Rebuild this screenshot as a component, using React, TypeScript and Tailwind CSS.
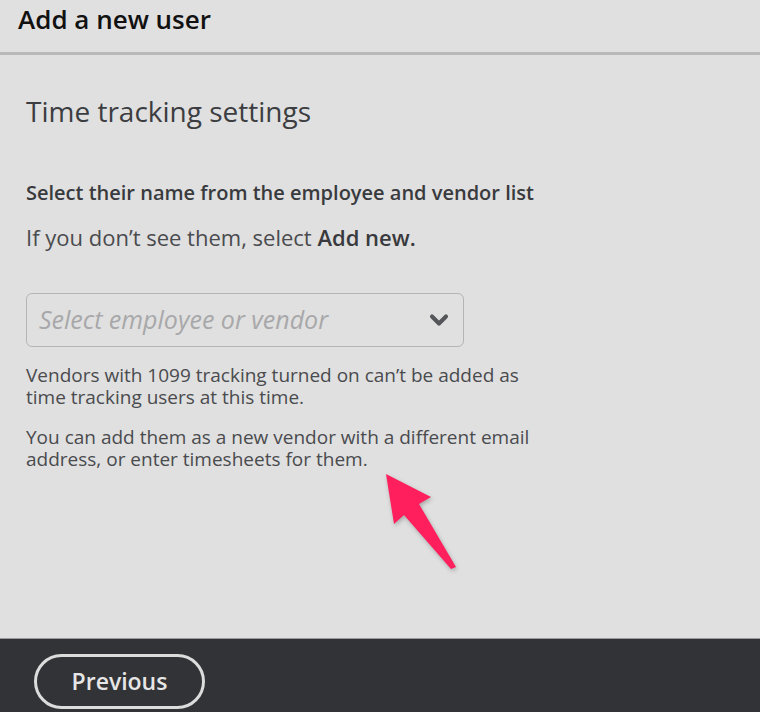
import { ChevronDown } from "lucide-react";

function Arrow() {
  return (
    <svg
      width="90"
      height="110"
      viewBox="380 468 90 110"
      className="absolute left-[380px] top-[468px] drop-shadow-[1px_2px_2px_rgba(0,0,0,0.25)]"
    >
      <polygon
        points="386,474 431,497 419,504 456,567 451,569 404,515 394,524"
        fill="#ff1f5d"
      />
    </svg>
  );
}

export default function App() {
  return (
    <div className="relative flex h-[712px] w-[760px] flex-col overflow-hidden bg-[#e0e0e0] font-['Open_Sans',sans-serif] text-[#393a3d]">
      <header className="flex h-[55px] shrink-0 items-start border-b-[3px] border-[#b9b9b9] px-[18px] pt-[3px]">
        <h1 className="text-[26px] font-semibold leading-[32px] text-[#111]">Add a new user</h1>
      </header>

      <main className="flex-1 px-[26px] pt-[38px]">
        <h2 className="text-[28px] leading-[36px] text-[#3c3d40]">Time tracking settings</h2>

        <p className="mt-[51px] text-[20px] font-semibold leading-[26px]">
          Select their name from the employee and vendor list
        </p>
        <p className="mt-[18px] text-[22px] leading-[26px] text-[#4a4b4e]">
          If you don’t see them, select <span className="font-semibold text-[#393a3d]">Add new.</span>
        </p>

        <button
          type="button"
          className="mt-[43px] flex h-[54px] w-[438px] items-center justify-between rounded-[6px] border border-[#b5b5b5] pl-[12px] pr-[10px]"
        >
          <span className="text-[25px] italic text-[#a8a8aa]">Select employee or vendor</span>
          <ChevronDown size={28} strokeWidth={3.5} className="text-[#55565a]" />
        </button>

        <p className="mt-[17px] w-[512px] text-[19px] leading-[22px] text-[#4a4b4e]">
          Vendors with 1099 tracking turned on can’t be added as time tracking users at this time.
        </p>
        <p className="mt-[18px] w-[512px] text-[19px] leading-[22px] text-[#4a4b4e]">
          You can add them as a new vendor with a different email address, or enter timesheets for them.
        </p>
      </main>

      <footer className="flex h-[74px] shrink-0 items-start border-t border-[#9a9a9c] bg-[#323336] px-[34px] pt-[15px]">
        <button
          type="button"
          className="flex h-[55px] w-[171px] items-center justify-center rounded-full border-[3px] border-[#dcdcdc] text-[23px] font-semibold text-[#e6e6e6]"
        >
          Previous
        </button>
      </footer>

      <Arrow />
    </div>
  );
}
